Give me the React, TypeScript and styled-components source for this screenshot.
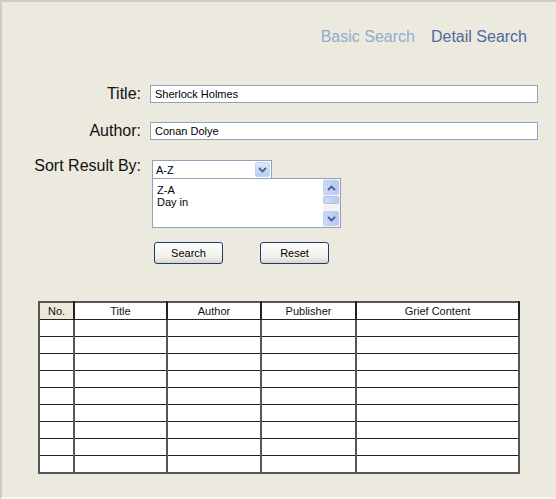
import styled, { createGlobalStyle } from "styled-components"

const GlobalStyle = createGlobalStyle`
html, body {
    margin: 0;
    padding: 0;
}
body {
    font-family: "Liberation Sans", Arial, sans-serif;
}
`

const headers = ["No.", "Title", "Author", "Publisher", "Grief Content"]
const widths = [35, 93, 94, 95, 163]
const rows = Array.from({ length: 9 }, (_, i) => i)

const Chevron = ({ up }: { up?: boolean }) => (
    <svg width="9" height="6" viewBox="0 0 9 6">
        <path
            d={up ? "M1 5 L4.5 1.5 L8 5" : "M1 1 L4.5 4.5 L8 1"}
            fill="none"
            stroke="#4d6185"
            strokeWidth="1.8"
        />
    </svg>
)

const App = () => {
    return (
        <Page>
            <GlobalStyle />
            <Nav>
                <NavLink>Basic Search</NavLink>
                <NavLink $active>Detail Search</NavLink>
            </Nav>

            <Form>
                <Label>Title:</Label>
                <Field>Sherlock Holmes</Field>

                <Label>Author:</Label>
                <Field>Conan Dolye</Field>

                <Label $top>Sort Result By:</Label>
                <SortBox>
                    <Select>
                        <SelectValue>A-Z</SelectValue>
                        <DropButton><Chevron /></DropButton>
                    </Select>
                    <ListBox>
                        <Options>
                            <div>Z-A</div>
                            <div>Day in</div>
                        </Options>
                        <ScrollBar>
                            <ScrollButton><Chevron up /></ScrollButton>
                            <Thumb />
                            <Track />
                            <ScrollButton><Chevron /></ScrollButton>
                        </ScrollBar>
                    </ListBox>
                </SortBox>

                <span />
                <Buttons>
                    <Button>Search</Button>
                    <Button>Reset</Button>
                </Buttons>
            </Form>

            <Table>
                <colgroup>
                    {widths.map((w, i) => <col key={i} style={{ width: w }} />)}
                </colgroup>
                <thead>
                    <tr>
                        {headers.map((h, i) => (
                            <Th key={h} $first={i === 0}>{h}</Th>
                        ))}
                    </tr>
                </thead>
                <tbody>
                    {rows.map(r => (
                        <tr key={r}>
                            {headers.map(h => <Td key={h} />)}
                        </tr>
                    ))}
                </tbody>
            </Table>
        </Page>
    )
}

export default App

const Page = styled.div`
width: 556px;
height: 499px;
box-sizing: border-box;
background-color: #ece9df;
border-top: 2px solid #cfccbf;
border-left: 2px solid #cfccbf;
border-bottom: 2px solid #f6f4ee;
padding-top: 25px;
overflow: hidden;
`

const Nav = styled.div`
display: flex;
justify-content: flex-end;
gap: 16px;
padding-right: 29px;
font-size: 16px;
line-height: 20px;
`

const NavLink = styled.span<{ $active?: boolean }>`
color: ${p => (p.$active ? "#4b6b9b" : "#92abd0")};
`

const Form = styled.div`
display: grid;
grid-template-columns: 139px 1fr;
column-gap: 9px;
row-gap: 19px;
padding-right: 18px;
margin-top: 38px;
align-items: center;
`

const Label = styled.div<{ $top?: boolean }>`
text-align: right;
font-size: 16px;
color: #111;
align-self: ${p => (p.$top ? "start" : "center")};
margin-top: ${p => (p.$top ? "-2px" : "0")};
`

const Field = styled.div`
height: 18px;
box-sizing: border-box;
border: 1px solid #8fa4bc;
background: #fff;
font-size: 11px;
line-height: 16px;
padding-left: 4px;
color: #000;
`

const SortBox = styled.div`
display: flex;
flex-direction: column;
align-items: flex-start;
padding-left: 2px;
margin-top: 1px;
`

const Select = styled.div`
width: 120px;
height: 18px;
box-sizing: border-box;
border: 1px solid #8fa4bc;
border-bottom: none;
background: #fff;
display: flex;
align-items: center;
`

const SelectValue = styled.div`
flex: 1;
font-size: 11px;
padding-left: 3px;
`

const DropButton = styled.div`
width: 15px;
height: 15px;
margin-right: 1px;
border-radius: 2px;
background: linear-gradient(#dfe8fd, #b7caf5);
border: 1px solid #c6d3f2;
box-sizing: border-box;
display: flex;
align-items: center;
justify-content: center;
`

const ListBox = styled.div`
width: 189px;
height: 50px;
box-sizing: border-box;
border: 1px solid #8fa4bc;
background: #fff;
display: flex;
`

const Options = styled.div`
flex: 1;
font-size: 11px;
line-height: 12px;
padding: 5px 0 0 4px;
`

const ScrollBar = styled.div`
width: 16px;
display: flex;
flex-direction: column;
background: #f4f3ee;
padding: 1px 1px 1px 0;
gap: 1px;
`

const ScrollButton = styled.div`
height: 15px;
border-radius: 2px;
background: linear-gradient(90deg, #c9d8fb, #b5c9f6);
border: 1px solid #c1d0f4;
box-sizing: border-box;
display: flex;
align-items: center;
justify-content: center;
`

const Thumb = styled.div`
height: 8px;
border-radius: 2px;
background: linear-gradient(90deg, #cbd9fb, #b9ccf6);
border: 1px solid #aebfe8;
box-sizing: border-box;
`

const Track = styled.div`
flex: 1;
`

const Buttons = styled.div`
display: flex;
gap: 37px;
padding-left: 4px;
margin-top: -5px;
`

const Button = styled.div`
width: 69px;
height: 22px;
box-sizing: border-box;
border: 1px solid #1c3d6e;
border-radius: 3px;
background: linear-gradient(#ffffff, #f1f0ea 70%, #d8d5c8);
font-size: 11px;
display: flex;
align-items: center;
justify-content: center;
color: #000;
`

const Table = styled.table`
border-collapse: collapse;
table-layout: fixed;
width: 480px;
margin: 37px 0 0 36px;
background: #fff;
border: 2px solid #555;
`

const Th = styled.th<{ $first?: boolean }>`
height: 16px;
padding: 0;
font-weight: normal;
font-size: 11px;
color: #111;
border: 1px solid #222;
border-right-width: 2px;
background: ${p => (p.$first ? "#ece9d8" : "#fff")};
`

const Td = styled.td`
height: 16px;
padding: 0;
border: 1px solid #222;
border-right: 2px solid #555;
`
